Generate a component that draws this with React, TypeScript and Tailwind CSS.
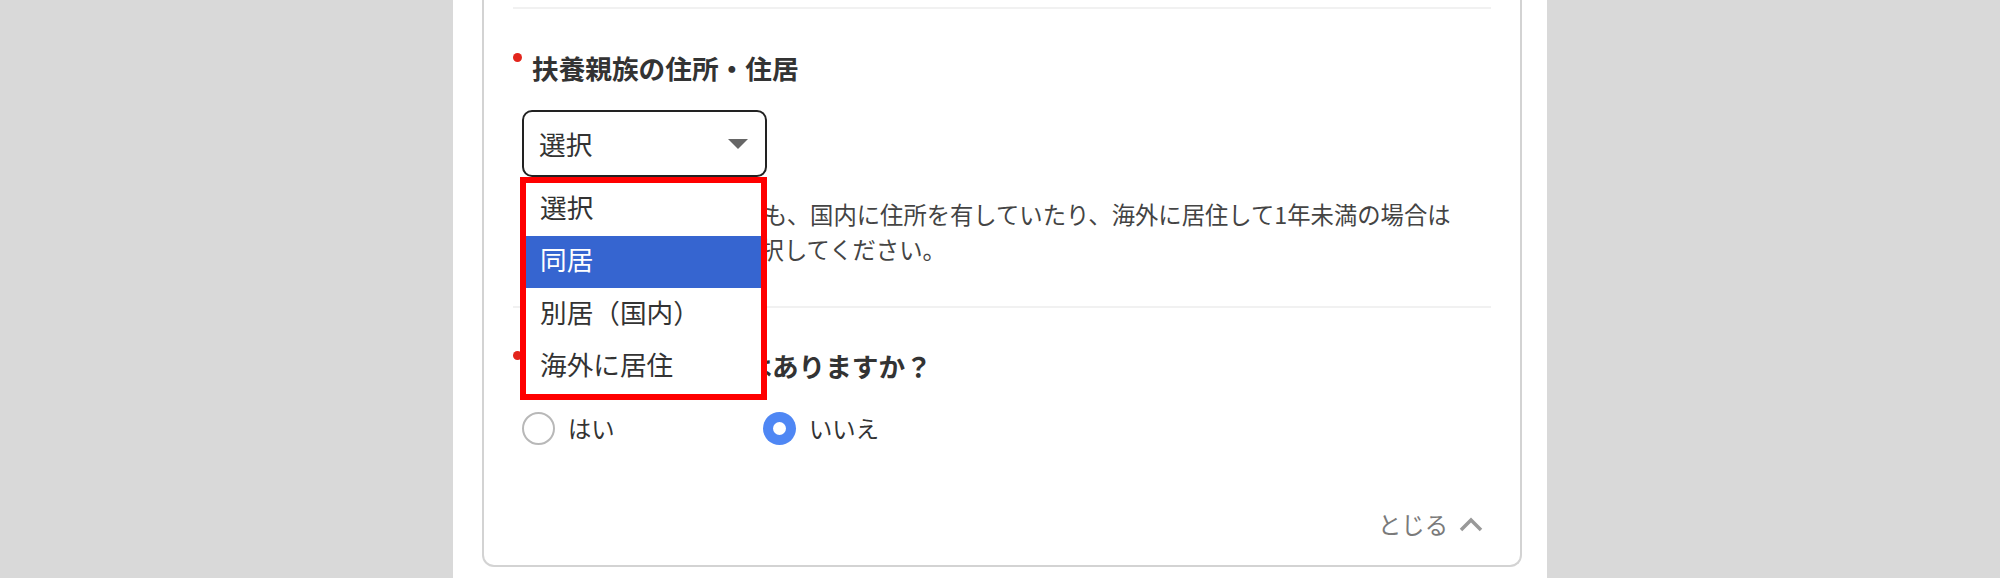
const options = ['選択', '同居', '別居（国内）', '海外に居住']

const RequiredDot = () => (
  <div className="w-[9px] shrink-0">
    <div className="mt-[5px] size-[9px] rounded-full bg-[#e3251c]" />
  </div>
)

const Divider = ({ className = '' }: { className?: string }) => (
  <div className={`h-[2px] bg-[#f1f1f1] ${className}`} />
)

const SelectField = () => {
  return (
    <div className="relative mt-[22px] w-[245px]">
      <div className="flex h-[67px] items-center justify-between rounded-[10px] border-2 border-[#222] pr-[17px] pl-[15px] text-[26.67px] text-[#333]">
        <span>選択</span>
        <svg width="20" height="10" viewBox="0 0 20 10">
          <polygon points="0,0 20,0 10,10" fill="#666" />
        </svg>
      </div>

      {/* open dropdown, framed in red */}
      <div className="absolute top-full left-[-2px] z-10 h-[223px] w-[247px] border-[6px] border-[#ff0000] bg-white">
        {options.map((opt, i) => (
          <div
            key={opt}
            className={`flex h-[52.5px] items-center pb-[5px] pl-[14px] text-[26.67px] ${
              i === 1 ? 'bg-[#3665d0] text-white' : 'text-[#333]'
            }`}
          >
            {opt}
          </div>
        ))}
      </div>
    </div>
  )
}

const Radio = ({ label, checked }: { label: string; checked?: boolean }) => (
  <div className="flex w-[241px] items-center gap-[13px]">
    {checked ? (
      <div className="flex size-[33px] items-center justify-center rounded-full bg-[#4f87f4]">
        <div className="size-[13px] rounded-full bg-white" />
      </div>
    ) : (
      <div className="size-[33px] rounded-full border-2 border-[#b8b8b8] bg-white" />
    )}
    <span className="text-[23.33px] leading-[35px] text-[#333]">{label}</span>
  </div>
)

const App = () => {
  return (
    <div className="flex h-[578px] w-full justify-center overflow-hidden bg-[#d9d9d9] font-['Noto_Sans_CJK_JP','Noto_Sans',sans-serif]">
      <div className="w-[1094px] bg-white pr-[25px] pl-[29px]">
        <div className="rounded-b-[12px] border-2 border-t-0 border-[#d3d3d3] px-[29px] pb-[23.5px]">
          <div className="pt-[7px]">
            <Divider />
          </div>

          {/* address / residence */}
          <div className="flex pt-[39px]">
            <RequiredDot />
            <div className="flex-1">
              <div className="pl-[10px] text-[26.67px] leading-[40px] font-bold text-[#333]">
                扶養親族の住所・住居
              </div>
              <SelectField />
              <div className="mt-[19.5px] pl-[10px] text-[23.33px] leading-[35px] text-[#444]">
                <span className="block whitespace-nowrap">
                  海外に住んでいる方でも、国内に住所を有していたり、海外に居住して1年未満の場合は
                </span>
                <span className="block pl-[7px] whitespace-nowrap">
                  「別居（国内）」を選択してください。
                </span>
              </div>
            </div>
          </div>

          <Divider className="mt-[39.5px]" />

          {/* yes / no question */}
          <div className="flex pt-[38px]">
            <RequiredDot />
            <div className="flex-1">
              <div className="pl-[10px] text-[26.67px] leading-[40px] font-bold text-[#333]">
                障害者控除の対象はありますか？
              </div>
              <div className="mt-[24.5px] flex">
                <Radio label="はい" />
                <Radio label="いいえ" checked />
              </div>
            </div>
          </div>

          <div className="mt-[61px] flex items-center justify-end gap-[11px] pr-[8px]">
            <span className="text-[23.33px] leading-[35px] text-[#7a7a7a]">とじる</span>
            <svg width="24" height="15" viewBox="0 0 24 15">
              <polyline
                points="2,13 12,3 22,13"
                fill="none"
                stroke="#999"
                strokeWidth="3.5"
              />
            </svg>
          </div>
        </div>
      </div>
    </div>
  )
}

export default App
